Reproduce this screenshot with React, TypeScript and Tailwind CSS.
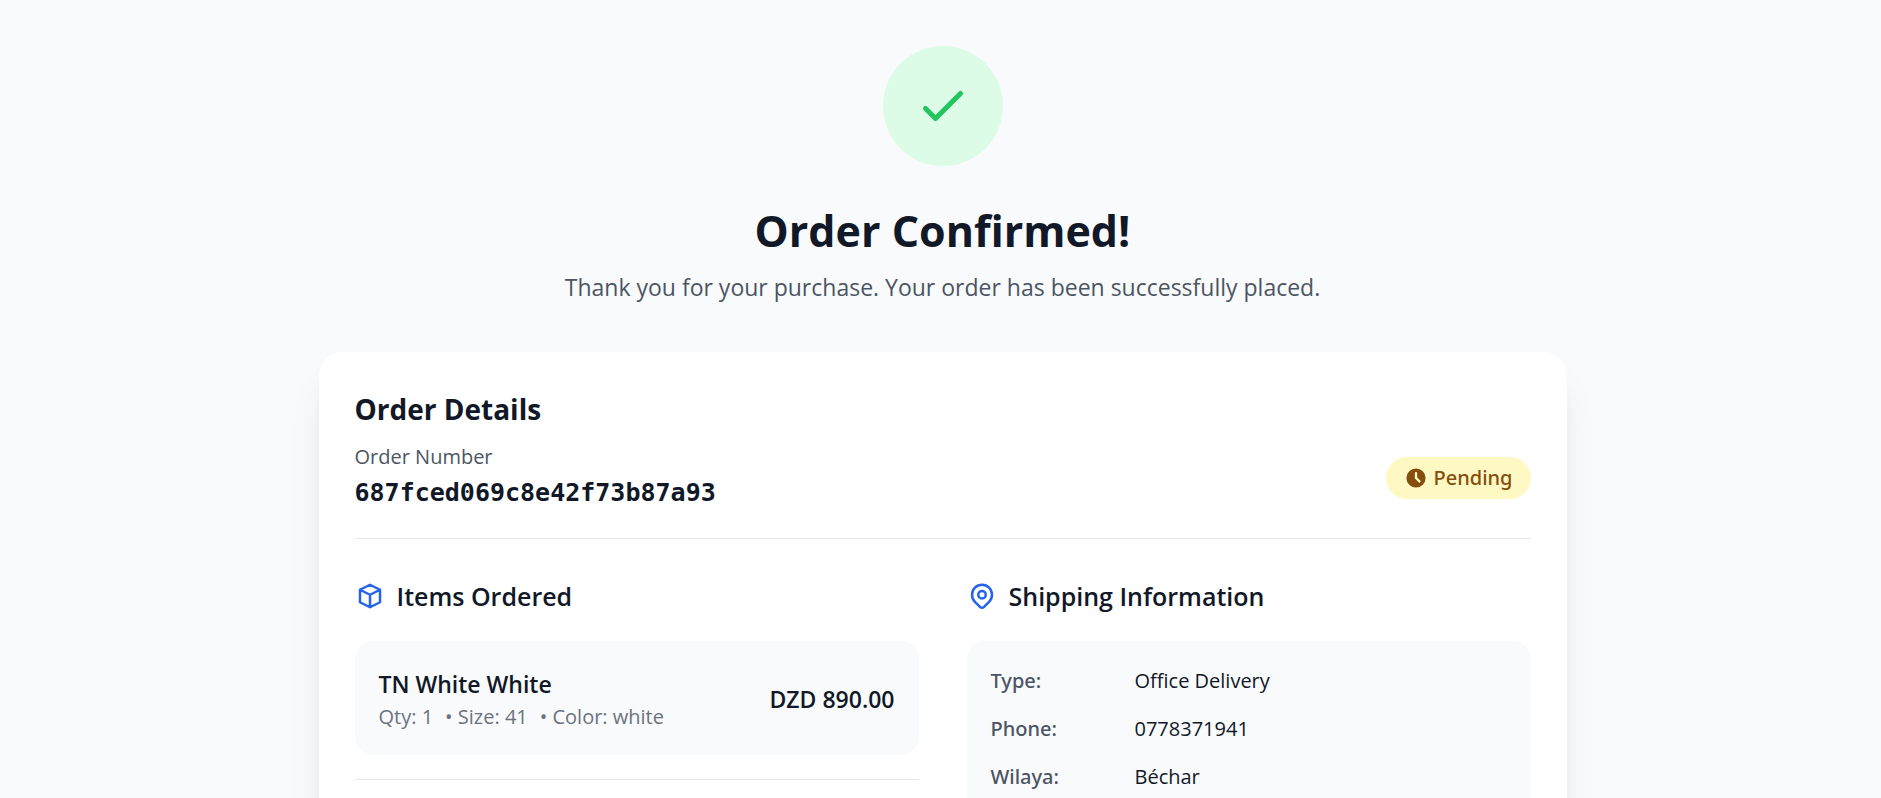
import React from "react";

const shipping = [
  { label: "Type:", value: "Office Delivery" },
  { label: "Phone:", value: "0778371941" },
  { label: "Wilaya:", value: "Béchar" },
];

function OutlineIcon({ paths, className }: { paths: string[]; className: string }) {
  return (
    <svg className={className} viewBox="0 0 24 24" fill="none" stroke="currentColor" aria-hidden="true">
      {paths.map((d) => (
        <path key={d} d={d} strokeWidth={2} strokeLinecap="round" strokeLinejoin="round" />
      ))}
    </svg>
  );
}

function SectionTitle({ paths, children }: { paths: string[]; children: React.ReactNode }) {
  return (
    <h3 className="mb-6 flex items-center gap-3 text-[25px] leading-[42px] font-semibold">
      <OutlineIcon className="size-[30px] text-[#2563eb]" paths={paths} />
      {children}
    </h3>
  );
}

export default function App() {
  return (
    <div className="min-h-screen bg-[#f9fafb] pt-[46px] pb-12 pl-1 font-['Open_Sans','Noto_Sans',sans-serif] text-[#111827]">
      <main className="mx-auto max-w-[1248px]">
        <header className="mb-[47px] text-center">
          <div className="mx-auto mb-[38px] flex size-[120px] items-center justify-center rounded-full bg-[#dcfce7]">
            <OutlineIcon className="size-[60px] text-[#22c55e]" paths={["M5 13l4 4L19 7"]} />
          </div>
          <h1 className="mb-[11px] text-[43px] leading-[54px] font-bold">Order Confirmed!</h1>
          <p className="text-[23px] leading-9 text-[#4b5563]">
            Thank you for your purchase. Your order has been successfully placed.
          </p>
        </header>

        <section className="rounded-3xl bg-white p-9 shadow-[0_30px_38px_-8px_rgba(0,0,0,0.1),0_12px_15px_-9px_rgba(0,0,0,0.1)]">
          <div className="mb-9 border-b border-[#e5e7eb] pb-6">
            <h2 className="mb-3 text-[28px] leading-[42px] font-bold">Order Details</h2>
            <div className="flex items-center justify-between">
              <div>
                <p className="text-[20px] leading-[30px] text-[#4b5563]">Order Number</p>
                <p className="font-['DejaVu_Sans_Mono',monospace] text-[25px] leading-[42px] font-bold">
                  687fced069c8e42f73b87a93
                </p>
              </div>
              <span className="flex items-center gap-1.5 rounded-full bg-[#fef9c3] px-[18px] py-1.5 font-['Noto_Sans',sans-serif] text-[20px] leading-[30px] font-medium text-[#854d0e]">
                <svg className="size-6" viewBox="0 0 20 20" fill="currentColor" aria-hidden="true">
                  <path
                    fillRule="evenodd"
                    clipRule="evenodd"
                    d="M10 18a8 8 0 100-16 8 8 0 000 16zm1-12a1 1 0 10-2 0v4a1 1 0 00.293.707l2.828 2.829a1 1 0 101.415-1.415L11 9.586V6z"
                  />
                </svg>
                Pending
              </span>
            </div>
          </div>

          <div className="grid grid-cols-2 gap-12">
            <div>
              <SectionTitle
                paths={["M20 7l-8-4-8 4m16 0l-8 4m8-4v10l-8 4m0-10L4 7m8 4v10M4 7v10l8 4"]}
              >
                Items Ordered
              </SectionTitle>
              <div className="mb-6 flex items-center justify-between rounded-[18px] bg-[#f9fafb] px-6 pt-[25px] pb-[23px]">
                <div>
                  <p className="text-[23px] leading-9 font-semibold">TN White White</p>
                  <p className="flex gap-3 text-[20px] leading-[30px] text-[#6b7280]">
                    <span>Qty: 1</span>
                    <span>• Size: 41</span>
                    <span>• Color: white</span>
                  </p>
                </div>
                <p className="text-[23px] leading-9 font-semibold">DZD 890.00</p>
              </div>
              <hr className="border-[#e5e7eb]" />
            </div>

            <div>
              <SectionTitle
                paths={[
                  "M17.657 16.657L13.414 20.9a1.998 1.998 0 01-2.827 0l-4.244-4.243a8 8 0 1111.314 0z",
                  "M15 11a3 3 0 11-6 0 3 3 0 016 0z",
                ]}
              >
                Shipping Information
              </SectionTitle>
              <dl className="flex flex-col gap-[18px] rounded-[18px] bg-[#f9fafb] px-6 pt-[25px] pb-[23px] text-[20px] leading-[30px]">
                {shipping.map((row) => (
                  <div key={row.label} className="flex">
                    <dt className="w-36 font-['Noto_Sans',sans-serif] font-medium text-[#4b5563]">{row.label}</dt>
                    <dd>{row.value}</dd>
                  </div>
                ))}
              </dl>
            </div>
          </div>
        </section>
      </main>
    </div>
  );
}
